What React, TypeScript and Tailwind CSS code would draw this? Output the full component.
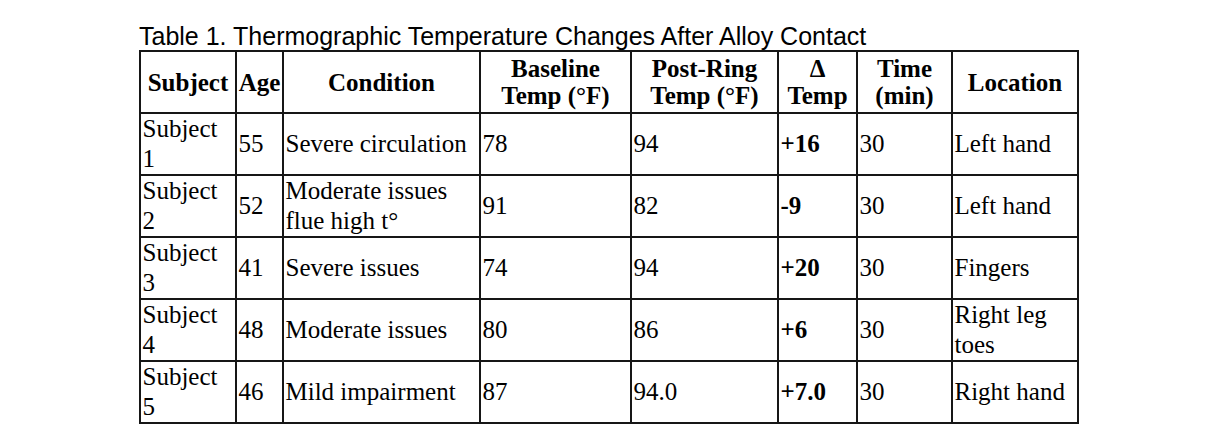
import React from 'react';

type Row = {
  subject: string;
  age: string;
  condition: React.ReactNode;
  baseline: string;
  post: string;
  delta: string;
  time: string;
  location: string;
};

const rows: Row[] = [
  { subject: '1', age: '55', condition: 'Severe circulation', baseline: '78', post: '94', delta: '+16', time: '30', location: 'Left hand' },
  {
    subject: '2',
    age: '52',
    condition: (
      <>
        Moderate issues
        <br />
        flue high t°
      </>
    ),
    baseline: '91',
    post: '82',
    delta: '-9',
    time: '30',
    location: 'Left hand',
  },
  { subject: '3', age: '41', condition: 'Severe issues', baseline: '74', post: '94', delta: '+20', time: '30', location: 'Fingers' },
  { subject: '4', age: '48', condition: 'Moderate issues', baseline: '80', post: '86', delta: '+6', time: '30', location: 'Right leg toes' },
  { subject: '5', age: '46', condition: 'Mild impairment', baseline: '87', post: '94.0', delta: '+7.0', time: '30', location: 'Right hand' },
];

const widths = [96, 47, 197, 151, 147, 79, 95, 126];

const th = 'border-2 border-[#161616] px-[1.5px] py-0 h-[62px] align-middle text-center font-bold leading-[27px]';
const td = 'border-2 border-[#161616] px-[1.5px] py-0 h-[62px] align-middle text-left leading-[30px]';

export default function App() {
  return (
    <div className="flex justify-center bg-white pt-[22px] text-black">
      <table
        className="table-fixed border-collapse w-[938px] text-[25px]"
        style={{ fontFamily: '"Liberation Serif", "Times New Roman", serif' }}
      >
        <caption
          className="text-left text-[25px] leading-[28px] caption-top"
          style={{ fontFamily: '"Liberation Sans", Arial, sans-serif' }}
        >
          Table 1. Thermographic Temperature Changes After Alloy Contact
        </caption>
        <colgroup>
          {widths.map((w, i) => (
            <col key={i} style={{ width: w }} />
          ))}
        </colgroup>
        <thead>
          <tr>
            <th className={th}>Subject</th>
            <th className={th + ' whitespace-nowrap'}>Age</th>
            <th className={th}>Condition</th>
            <th className={th}>
              Baseline
              <br />
              Temp (°F)
            </th>
            <th className={th}>
              Post-Ring
              <br />
              Temp (°F)
            </th>
            <th className={th}>
              Δ
              <br />
              Temp
            </th>
            <th className={th}>
              Time
              <br />
              (min)
            </th>
            <th className={th}>Location</th>
          </tr>
        </thead>
        <tbody>
          {rows.map((r) => (
            <tr key={r.subject}>
              <td className={td}>
                Subject
                <br />
                {r.subject}
              </td>
              <td className={td}>{r.age}</td>
              <td className={td}>{r.condition}</td>
              <td className={td}>{r.baseline}</td>
              <td className={td}>{r.post}</td>
              <td className={td + ' font-bold'}>{r.delta}</td>
              <td className={td}>{r.time}</td>
              <td className={td}>{r.location}</td>
            </tr>
          ))}
        </tbody>
      </table>
    </div>
  );
}
